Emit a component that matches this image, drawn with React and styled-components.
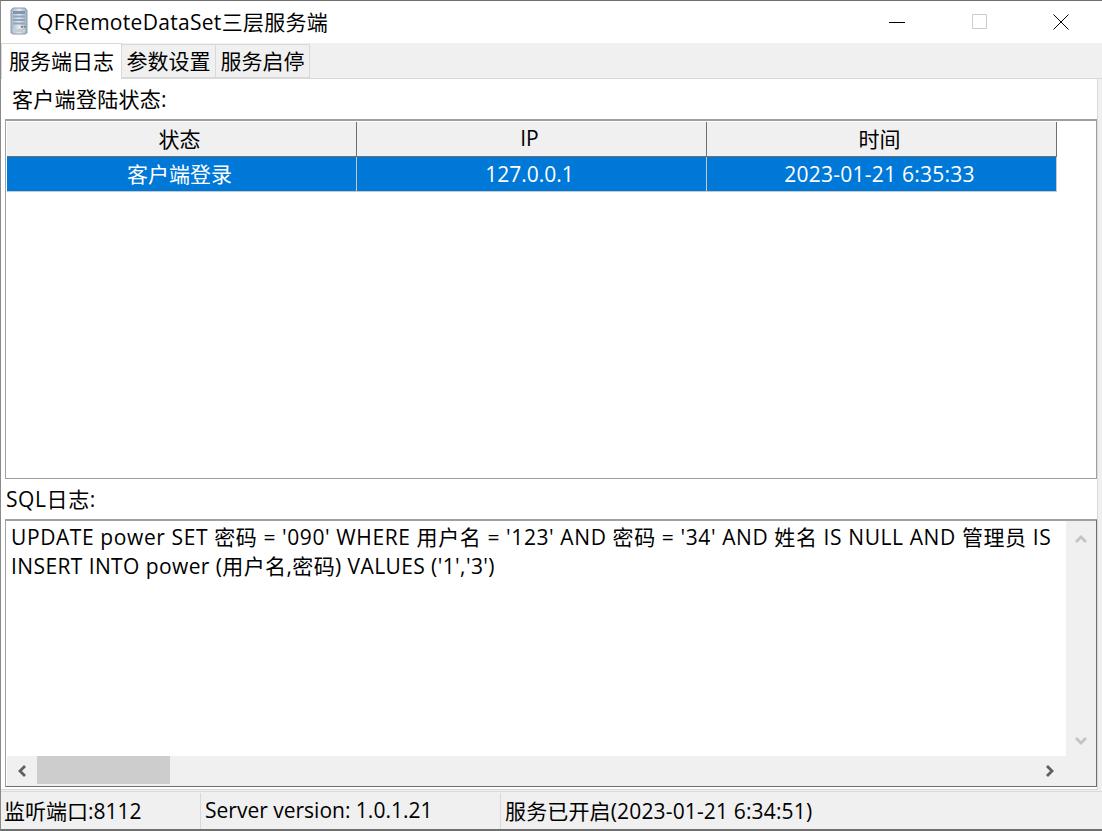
import React from "react";
import styled, { createGlobalStyle } from "styled-components";

const Global = createGlobalStyle`
  html, body { margin: 0; padding: 0; background: #f0f0f0; }
  * { box-sizing: border-box; }
`;

const FONT = `"Open Sans", "Noto Sans CJK SC", sans-serif`;

const Win = styled.div`
  width: 1102px;
  height: 831px;
  display: flex;
  flex-direction: column;
  background: #f0f0f0;
  border-top: 1px solid #6f6f6f;
  border-left: 1px solid #8a8a8a;
  border-bottom: 2px solid #6f6f6f;
  font-family: ${FONT};
  font-size: 21px;
  color: #000;
  overflow: hidden;
`;

const TitleBar = styled.div`
  height: 42px;
  flex: none;
  display: flex;
  align-items: center;
  background: #fff;
  padding-left: 9px;
  padding-bottom: 2px;
`;

const Caption = styled.div`
  margin-left: 9px;
  letter-spacing: 0.3px;
  flex: 1;
  white-space: nowrap;
`;

const WinBtn = styled.div`
  width: 82px;
  height: 40px;
  padding-top: 1px;
  display: flex;
  align-items: center;
  justify-content: center;
`;

const TabStrip = styled.div`
  height: 36px;
  flex: none;
  display: flex;
  align-items: flex-end;
  border-bottom: 1px solid #d9d9d9;
`;

const Tab = styled.div`
  height: ${(p) => (p.$active ? 36 : 34)}px;
  width: ${(p) => p.$w}px;
  margin-bottom: ${(p) => (p.$active ? -1 : 0)}px;
  background: ${(p) => (p.$active ? "#fff" : "#f0f0f0")};
  border: 1px solid #d9d9d9;
  border-bottom: ${(p) => (p.$active ? "none" : "1px solid #d9d9d9")};
  margin-left: ${(p) => (p.$active ? 0 : -1)}px;
  padding-bottom: ${(p) => (p.$active ? 3 : 2)}px;
  display: flex;
  align-items: center;
  justify-content: center;
  white-space: nowrap;
  position: relative;
`;

const Page = styled.div`
  width: 1097px;
  height: 711px;
  flex: none;
  display: flex;
  flex-direction: column;
  background: #fff;
  border-right: 1px solid #d9d9d9;
  border-bottom: 1px solid #d9d9d9;
  padding-left: 4px;
`;

const Label = styled.div`
  height: ${(p) => p.$h}px;
  flex: none;
  display: flex;
  align-items: center;
  padding-left: ${(p) => p.$pl}px;
  padding-bottom: 2px;
  letter-spacing: ${(p) => p.$ls || 0}px;
  white-space: nowrap;
`;

const Sunken = styled.div`
  flex: none;
  height: ${(p) => p.$h}px;
  border-top: 2px solid #a0a0a0;
  border-left: 1px solid #a0a0a0;
  border-right: 1px solid ${(p) => (p.$dark ? "#6f6f6f" : "#a0a0a0")};
  border-bottom: 1px solid ${(p) => (p.$dark ? "#6f6f6f" : "#a0a0a0")};
  padding-left: 1px;
  padding-top: ${(p) => (p.$dark ? 0 : 1)}px;
  background: #fff;
  overflow: hidden;
`;

const Grid = styled.div`
  display: grid;
  grid-template-columns: 350px 350px 350px;
  width: 1050px;
`;

const HeadCell = styled.div`
  height: 35px;
  background: #f0f0f0;
  border-right: 1px solid #6f6f6f;
  border-bottom: 1px solid #6f6f6f;
  padding: 0 4px 2px 0;
  display: flex;
  align-items: center;
  justify-content: center;
`;

const RowCell = styled.div`
  height: 35px;
  background: #0078d7;
  color: #fff;
  border-right: 1px solid #c8c8c8;
  border-bottom: 1px solid #c8c8c8;
  padding: 0 4px ${(p) => (p.$latin ? 0 : 2)}px 0;
  letter-spacing: ${(p) => p.$ls || 0}px;
  display: flex;
  align-items: center;
  justify-content: center;
`;

const MemoBody = styled.div`
  display: grid;
  grid-template-columns: 1059px 30px;
  grid-template-rows: 235px 30px;
  height: 265px;
`;

const MemoText = styled.div`
  margin-right: 8px;
  padding: 2px 0 0 4px;
  overflow: hidden;
`;

const MemoLine = styled.div`
  height: 29px;
  line-height: 29px;
  letter-spacing: ${(p) => p.$ls}px;
  white-space: nowrap;
`;

const VBar = styled.div`
  background: #f0f0f0;
  display: flex;
  flex-direction: column;
  align-items: center;
  justify-content: space-between;
  padding: 14px 1px 11px 0;
`;

const HBar = styled.div`
  grid-column: 1 / span 2;
  background: #f0f0f0;
  display: flex;
  align-items: flex-start;
`;

const ArrowBtn = styled.div`
  width: 30px;
  height: 30px;
  flex: none;
  display: flex;
  align-items: center;
  justify-content: center;
`;

const Thumb = styled.div`
  width: 133px;
  height: 28px;
  flex: none;
  background: #cdcdcd;
`;

const HSpacer = styled.div`
  flex: 1;
`;

const Corner = styled.div`
  width: 32px;
  flex: none;
`;

const StatusBar = styled.div`
  flex: 1;
  display: flex;
  margin-top: 1px;
  border-top: 1px solid #d9d9d9;
  padding-top: 1px;
`;

const StatusPanel = styled.div`
  width: ${(p) => p.$w}px;
  flex: ${(p) => (p.$w ? "none" : 1)};
  display: flex;
  align-items: center;
  padding-left: ${(p) => p.$pl || 4}px;
  padding-bottom: 2px;
  border-right: ${(p) => (p.$w ? "1px solid #d9d9d9" : "none")};
  letter-spacing: ${(p) => p.$ls || 0}px;
  white-space: nowrap;
`;

const Chevron = ({ dir, color }) => {
  const paths = {
    up: "M1 7 L6 2 L11 7",
    down: "M1 1 L6 6 L11 1",
    left: "M7 1 L2 6 L7 11",
    right: "M2 1 L7 6 L2 11",
  };
  const vertical = dir === "up" || dir === "down";
  return (
    <svg width={vertical ? 12 : 9} height={vertical ? 8 : 12} viewBox={vertical ? "0 0 12 8" : "0 0 9 12"}>
      <path d={paths[dir]} fill="none" stroke={color} strokeWidth="2.8" />
    </svg>
  );
};

const ServerIcon = () => (
  <svg width="18" height="28" viewBox="0 0 18 28">
    <defs>
      <linearGradient id="srv" x1="0" y1="0" x2="1" y2="0">
        <stop offset="0" stopColor="#a3b4c6" />
        <stop offset="0.5" stopColor="#e6ebf1" />
        <stop offset="1" stopColor="#9dacbf" />
      </linearGradient>
    </defs>
    <path d="M3 1 H15 L17 3 V26 L15 27 H3 L1 26 V3 Z" fill="url(#srv)" stroke="#8c9cb0" />
    <rect x="3" y="4" width="12" height="3" fill="#8097ae" />
    <rect x="3" y="8.5" width="12" height="2" fill="#8fa4ba" />
    <rect x="3" y="12" width="12" height="2" fill="#8fa4ba" />
    <rect x="3" y="15.5" width="12" height="2" fill="#8fa4ba" />
    <rect x="11" y="19" width="2" height="1.5" fill="#c9504a" />
    <rect x="14" y="19" width="2" height="1.5" fill="#4fa45a" />
    <rect x="3" y="22" width="12" height="3" fill="#c3ccd7" />
  </svg>
);

const columns = ["状态", "IP", "时间"];
const row = [
  { text: "客户端登录" },
  { text: "127.0.0.1", latin: true },
  { text: "2023-01-21 6:35:33", latin: true, ls: 0.25 },
];

export default function App() {
  return (
    <>
      <Global />
      <Win>
        <TitleBar>
          <ServerIcon />
          <Caption>QFRemoteDataSet三层服务端</Caption>
          <WinBtn>
            <svg width="16" height="16" viewBox="0 0 16 16">
              <path d="M0 8.5 H16" fill="none" stroke="#000" />
            </svg>
          </WinBtn>
          <WinBtn>
            <svg width="16" height="16" viewBox="0 0 16 16">
              <path d="M1.5 0.5 H15.5 V14.5 H1.5 Z" fill="none" stroke="#cccccc" />
            </svg>
          </WinBtn>
          <WinBtn>
            <svg width="16" height="16" viewBox="0 0 16 16">
              <path d="M0.5 0.5 L15.5 15.5 M15.5 0.5 L0.5 15.5" fill="none" stroke="#000" />
            </svg>
          </WinBtn>
        </TitleBar>
        <TabStrip>
          <Tab $active $w={121}>服务端日志</Tab>
          <Tab $w={95}>参数设置</Tab>
          <Tab $w={95}>服务启停</Tab>
        </TabStrip>
        <Page>
          <Label $h={40} $pl={7} $ls={0.3}>客户端登陆状态:</Label>
          <Sunken $h={360}>
            <Grid>
              {columns.map((c) => <HeadCell key={c}>{c}</HeadCell>)}
              {row.map((c) => <RowCell key={c.text} $latin={c.latin} $ls={c.ls}>{c.text}</RowCell>)}
            </Grid>
          </Sunken>
          <Label $h={40} $pl={1} $ls={0.6}>SQL日志:</Label>
          <Sunken $h={268} $dark>
            <MemoBody>
              <MemoText>
                <MemoLine $ls={0.6}>UPDATE power SET 密码 = '090' WHERE 用户名 = '123' AND 密码 = '34' AND 姓名 IS NULL AND 管理员 IS</MemoLine>
                <MemoLine $ls={0.4}>INSERT INTO power (用户名,密码) VALUES ('1','3')</MemoLine>
              </MemoText>
              <VBar>
                <Chevron dir="up" color="#c4c4c4" />
                <Chevron dir="down" color="#c4c4c4" />
              </VBar>
              <HBar>
                <ArrowBtn><Chevron dir="left" color="#606060" /></ArrowBtn>
                <Thumb />
                <HSpacer />
                <ArrowBtn><Chevron dir="right" color="#606060" /></ArrowBtn>
                <Corner />
              </HBar>
            </MemoBody>
          </Sunken>
        </Page>
        <StatusBar>
          <StatusPanel $w={200} $pl={3}>监听端口:8112</StatusPanel>
          <StatusPanel $w={300}>Server version: 1.0.1.21</StatusPanel>
          <StatusPanel $ls={0.15}>服务已开启(2023-01-21 6:34:51)</StatusPanel>
        </StatusBar>
      </Win>
    </>
  );
}
